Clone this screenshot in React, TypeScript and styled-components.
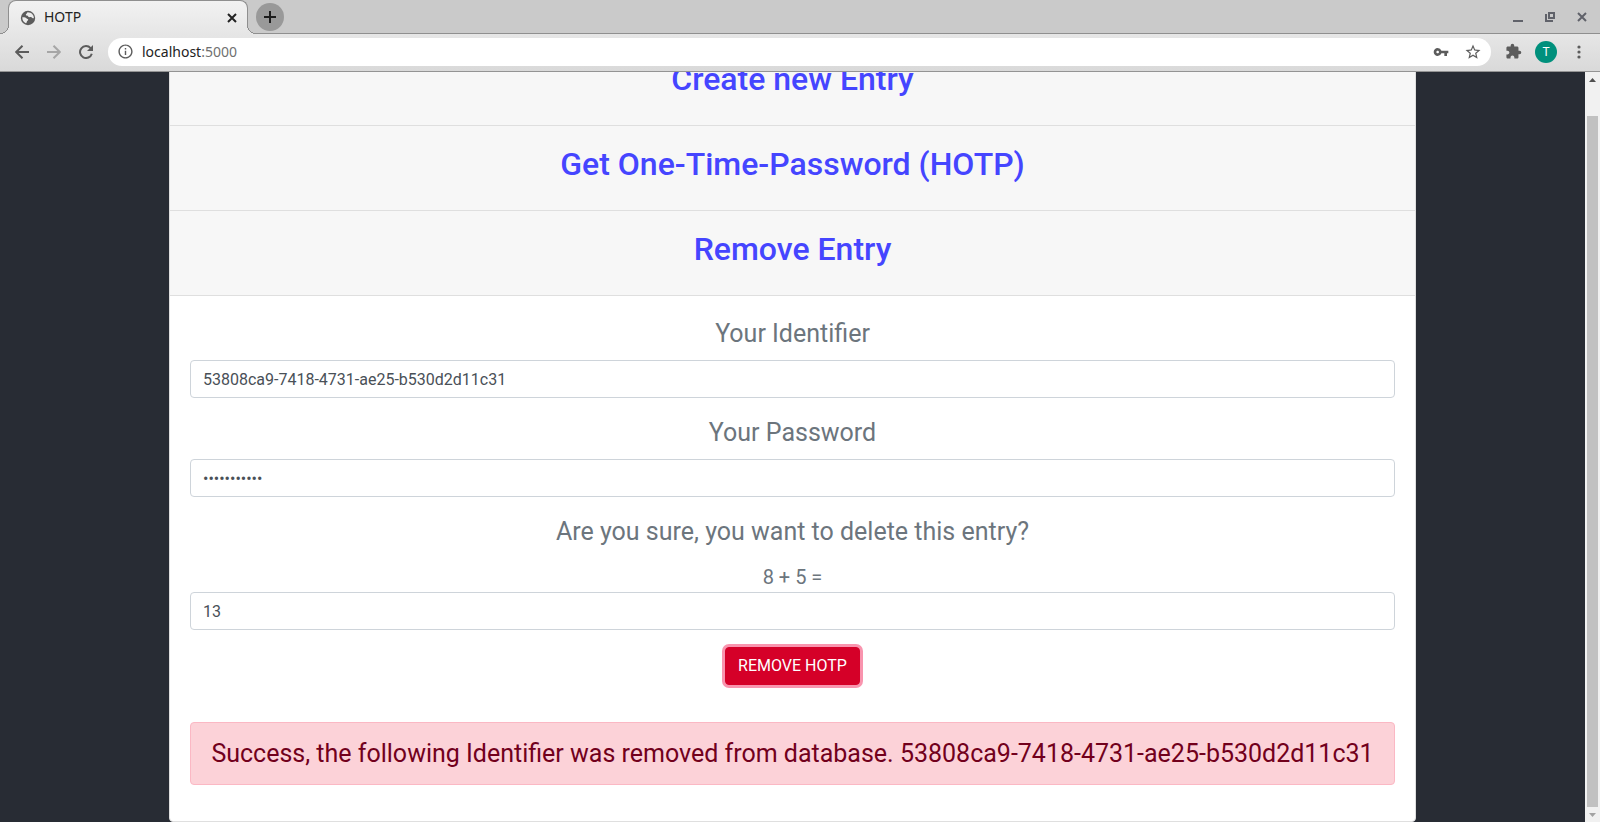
import React from "react";
import styled, { createGlobalStyle } from "styled-components";
import { MdInfoOutline, MdVpnKey, MdStarBorder, MdExtension } from "react-icons/md";

const GlobalStyle = createGlobalStyle`
  *, *::before, *::after { box-sizing: border-box; }
  body { margin: 0; background: #282c34; }
  button, input { font: inherit; margin: 0; }
`;

const uiFont = `"Noto Sans", "Open Sans", sans-serif`;
const pageFont = `Roboto, "Liberation Sans", sans-serif`;

const Browser = styled.div`
  display: flex;
  flex-direction: column;
  height: 100vh;
  overflow: hidden;
`;

const TabStrip = styled.div`
  display: flex;
  align-items: center;
  height: 34px;
  flex: none;
  padding: 0 8px;
  background: #cacaca;
  border-bottom: 1px solid #8f8f8f;
  font: 14px/20px ${uiFont};
`;

const Tab = styled.div`
  position: relative;
  display: flex;
  align-items: center;
  width: 240px;
  height: 34px;
  padding: 0 8px 0 11px;
  background: linear-gradient(#f2f2f2, #e6e6e6);
  border: 1px solid #8f8f8f;
  border-bottom: none;
  border-radius: 8px 8px 0 0;
  margin-bottom: -1px;

  /* Curved feet that join the tab to the toolbar. */
  &::before,
  &::after {
    content: "";
    position: absolute;
    bottom: 0;
    width: 9px;
    height: 9px;
  }
  &::before {
    left: -9px;
    background: radial-gradient(circle at 0 0, #cacaca 8px, #8f8f8f 8px 9px, #e6e6e6 9px);
  }
  &::after {
    right: -9px;
    background: radial-gradient(circle at 100% 0, #cacaca 8px, #8f8f8f 8px 9px, #e6e6e6 9px);
  }
`;

const TabTitle = styled.span`
  flex: 1;
  padding: 0 0 1px 8px;
  color: #222;
`;

const IconButton = styled.button<{ $color?: string; $size?: number }>`
  display: flex;
  align-items: center;
  justify-content: center;
  flex: none;
  width: ${(p) => p.$size ?? 20}px;
  height: ${(p) => p.$size ?? 20}px;
  padding: 0;
  border: none;
  background: none;
  color: ${(p) => p.$color ?? "#5c5c5c"};
`;

const NewTab = styled(IconButton)`
  width: 28px;
  height: 28px;
  margin-left: 8px;
  border-radius: 50%;
  background: #999;
  color: #1c1c1c;
`;

const WindowButtons = styled.div`
  display: flex;
  gap: 12px;
  margin-left: auto;
`;

const Toolbar = styled.div`
  display: flex;
  align-items: center;
  flex: none;
  height: 38px;
  padding: 0 11px 2px 12px;
  gap: 12px;
  background: linear-gradient(#e6e6e6, #d9d9d9);
  border-bottom: 1px solid #949494;
`;

const AddressBar = styled.div`
  display: flex;
  align-items: center;
  flex: 1;
  height: 28px;
  padding: 0 8px;
  gap: 8px;
  border-radius: 14px;
  background: #fff;
  font: 14px/20px ${uiFont};
  color: #222;
`;

const Address = styled.span`
  flex: 1;
`;

const Port = styled.span`
  color: #707070;
`;

const AddressActions = styled.div`
  display: flex;
  gap: 12px;
`;

const Avatar = styled.button`
  width: 22px;
  height: 22px;
  padding: 0;
  border: none;
  border-radius: 50%;
  background: #00907c;
  color: #fff;
  font: 12px/22px ${pageFont};
`;

const Viewport = styled.div`
  display: flex;
  flex: 1;
  min-height: 0;
`;

/* The document is anchored to its end, as when scrolled all the way down. */
const Page = styled.main`
  display: flex;
  flex-direction: column;
  justify-content: flex-end;
  flex: 1;
  overflow: hidden;
  padding: 0 169px;
  background: #282c34;
  font: 16px/24px ${pageFont};
`;

const Card = styled.section`
  flex: none;
  background: #fff;
  border: 1px solid #dfdfdf;
  border-radius: 4px;
  text-align: center;
`;

const CardHeader = styled.h2`
  margin: 0;
  background: #f7f7f7;
  border-bottom: 1px solid #dfdfdf;
`;

const HeaderButton = styled.button`
  display: block;
  width: 100%;
  padding: 19px 20px 27px;
  border: none;
  background: none;
  color: #4545ff;
  font-size: 32px;
  font-weight: 500;
  line-height: 38px;
`;

const CardBody = styled.form`
  padding: 19px 20px 20px;
`;

const FormGroup = styled.div`
  display: flex;
  flex-direction: column;
  margin-bottom: 16px;
`;

const Label = styled.label`
  margin-bottom: 8px;
  color: #6c757d;
  font-size: 25px;
  line-height: 37px;
`;

const Question = styled.p`
  margin: 0 0 12px;
  color: #6c757d;
  font-size: 25px;
  line-height: 37px;
`;

const Sum = styled.label`
  color: #6c757d;
  font-size: 20px;
  line-height: 30px;
`;

const Input = styled.input`
  width: 100%;
  height: 38px;
  padding: 6px 12px;
  border: 1px solid #ced4da;
  border-radius: 4px;
  background: #fff;
  color: #495057;
`;

const RemoveButton = styled.button`
  margin: 1px 0 0;
  padding: 6px 12px;
  border: 1px solid #d50028;
  border-radius: 4px;
  background: #d50028;
  box-shadow: 0 0 0 3px #f994ae;
  color: #fff;
  text-transform: uppercase;
`;

const Alert = styled.div`
  margin: 37px 0 16px;
  padding: 12px 20px;
  border: 1px solid #fbb8c4;
  border-radius: 4px;
  background: #fcd2d8;
  color: #72001c;
  font-size: 25px;
  line-height: 37px;
`;

const Scrollbar = styled.div`
  display: flex;
  flex-direction: column;
  align-items: center;
  flex: none;
  width: 15px;
  background: #f1f1f1;
`;

const ScrollArrow = styled(IconButton)`
  width: 15px;
  height: 15px;
`;

const Track = styled.div`
  display: flex;
  flex-direction: column;
  justify-content: flex-end;
  align-items: center;
  flex: 1;
  width: 100%;
`;

const Thumb = styled.div`
  width: 11px;
  height: 96%;
  background: #c1c1c1;
`;

const GlobeIcon = () => (
  <svg width="16" height="16" viewBox="0 0 16 16">
    <circle cx="8" cy="8" r="7.2" fill="#5c5c5c" />
    <path
      d="M7.6 2.2c-.9.5-.6 1.3-1.4 1.8-.6.4-.3 1.3.3 1.5.8.3 1.5.1 1.7.9.2.8 1.2.9 2 .7.8-.3 1.5.3 2.2.9.6.5 1.1.3 1.5-.1C13.800 5 11.700 2.300 7.600 2.200z"
      fill="#ececec"
    />
    <path
      d="M2.3 7.3c1.4-.3 3.200 0 4.100.9.7.7 1.900.6 1.800 1.600-.1.900-1.200.9-1.300 1.800-.1.800-.3 1.500-1 1.600C3.700 12.300 2.100 10 2.300 7.300z"
      fill="#ececec"
    />
  </svg>
);

export default function App() {
  return (
    <Browser>
      <GlobalStyle />
      <TabStrip>
        <Tab>
          <GlobeIcon />
          <TabTitle>HOTP</TabTitle>
          <IconButton $size={14} $color="#222" aria-label="Close tab">
            <svg width="10" height="10" stroke="currentColor" strokeWidth="2">
              <path d="M1 1l8 8M9 1l-8 8" />
            </svg>
          </IconButton>
        </Tab>
        <NewTab aria-label="New tab">
          <svg width="12" height="12" stroke="currentColor" strokeWidth="2">
            <path d="M0 6h12M6 0v12" />
          </svg>
        </NewTab>
        <WindowButtons>
          <IconButton aria-label="Minimize">
            <svg width="10" height="10">
              <path d="M0 9h10" stroke="#60626a" strokeWidth="2" />
            </svg>
          </IconButton>
          <IconButton aria-label="Restore">
            <svg width="10" height="10" fill="none" stroke="#60626a" strokeWidth="2">
              <path d="M4 1h5v5h-5zM1 2v7h7" />
            </svg>
          </IconButton>
          <IconButton aria-label="Close window">
            <svg width="10" height="10" stroke="#60626a" strokeWidth="2">
              <path d="M1 1l8 8M9 1l-8 8" />
            </svg>
          </IconButton>
        </WindowButtons>
      </TabStrip>
      <Toolbar>
        <IconButton aria-label="Back">
          <svg width="14" height="14" fill="none" stroke="currentColor" strokeWidth="2">
            <path d="M14 7H1.500M7.500 .7L1.200 7l6.300 6.300" />
          </svg>
        </IconButton>
        <IconButton aria-label="Forward" $color="#a6a6a6">
          <svg width="14" height="14" fill="none" stroke="currentColor" strokeWidth="2">
            <path d="M0 7h12.500M6.500 .7L12.800 7l-6.300 6.300" />
          </svg>
        </IconButton>
        <IconButton aria-label="Reload">
          <svg width="14" height="14" fill="none">
            <path d="M12.800 8.700A6 6 0 1 1 11.600 3.100" stroke="currentColor" strokeWidth="2" />
            <path d="M14 0v6H8z" fill="currentColor" />
          </svg>
        </IconButton>
        <AddressBar>
          <IconButton aria-label="Site information" $size={18}>
            <MdInfoOutline size={17} />
          </IconButton>
          <Address>localhost<Port>:5000</Port></Address>
          <AddressActions>
            <IconButton aria-label="Passwords"><MdVpnKey size={16} /></IconButton>
            <IconButton aria-label="Bookmark"><MdStarBorder size={18} /></IconButton>
          </AddressActions>
        </AddressBar>
        <IconButton aria-label="Extensions"><MdExtension size={17} /></IconButton>
        <Avatar aria-label="Profile">T</Avatar>
        <IconButton aria-label="Menu">
          <svg width="4" height="14" fill="currentColor">
            <circle cx="2" cy="2" r="1.6" />
            <circle cx="2" cy="7" r="1.6" />
            <circle cx="2" cy="12" r="1.6" />
          </svg>
        </IconButton>
      </Toolbar>
      <Viewport>
        <Page>
          <Card>
            <CardHeader><HeaderButton>Create new Entry</HeaderButton></CardHeader>
            <CardHeader><HeaderButton>Get One-Time-Password (HOTP)</HeaderButton></CardHeader>
            <CardHeader><HeaderButton>Remove Entry</HeaderButton></CardHeader>
            <CardBody onSubmit={(e) => e.preventDefault()}>
              <FormGroup>
                <Label htmlFor="identifier">Your Identifier</Label>
                <Input id="identifier" defaultValue="53808ca9-7418-4731-ae25-b530d2d11c31" />
              </FormGroup>
              <FormGroup>
                <Label htmlFor="password">Your Password</Label>
                <Input id="password" type="password" defaultValue="supersecret" />
              </FormGroup>
              <FormGroup>
                <Question>Are you sure, you want to delete this entry?</Question>
                <Sum htmlFor="answer">8 + 5 =</Sum>
                <Input id="answer" defaultValue="13" />
              </FormGroup>
              <RemoveButton type="submit">Remove HOTP</RemoveButton>
              <Alert role="alert">
                Success, the following Identifier was removed from database. 53808ca9-7418-4731-ae25-b530d2d11c31
              </Alert>
            </CardBody>
          </Card>
        </Page>
        <Scrollbar>
          <ScrollArrow aria-label="Scroll up">
            <svg width="7" height="4"><path d="M0 4L3.5 0L7 4z" fill="#505050" /></svg>
          </ScrollArrow>
          <Track><Thumb /></Track>
          <ScrollArrow aria-label="Scroll down">
            <svg width="7" height="4"><path d="M0 0L3.5 4L7 0z" fill="#a3a3a3" /></svg>
          </ScrollArrow>
        </Scrollbar>
      </Viewport>
    </Browser>
  );
}
